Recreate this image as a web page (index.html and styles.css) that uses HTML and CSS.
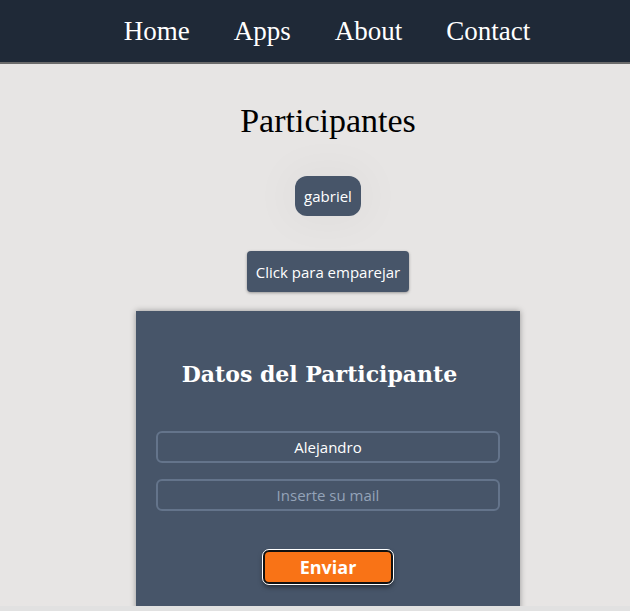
FILE: index.html
```html
<!DOCTYPE html>
<html lang="es">
<head>
<meta charset="utf-8">
<title>Participantes</title>
<link rel="stylesheet" href="styles.css">
</head>
<body>
<nav class="nav">
  <a class="nav-link" href="#">Home</a>
  <a class="nav-link" href="#">Apps</a>
  <a class="nav-link" href="#">About</a>
  <a class="nav-link" href="#">Contact</a>
</nav>
<main class="main">
  <h1 class="title">Participantes</h1>
  <div class="list">
    <span class="pill">gabriel</span>
  </div>
  <button class="match-btn" type="button">Click para emparejar</button>
  <form class="card">
    <h2 class="card-title">Datos del Participante</h2>
    <input class="field" type="text" value="Alejandro">
    <input class="field" type="email" placeholder="Inserte su mail">
    <button class="send-btn" type="button">Enviar</button>
  </form>
</main>
</body>
</html>
```
FILE: styles.css
```css
html {
  background: #e1e1e1;
}
body {
  margin: 0;
  background: #e7e5e4;
  height: 606px;
  overflow: hidden;
  font-family: "Open Sans", "Noto Sans", sans-serif;
}
.nav {
  height: 62px;
  background: #1f2937;
  border-bottom: 2px solid #6b6b6b;
  display: flex;
  justify-content: center;
  align-items: center;
  gap: 44px;
  padding-left: 24px;
}
.nav-link {
  color: #ffffff;
  text-decoration: none;
  font-family: "Liberation Serif", serif;
  font-size: 27px;
}
.main {
  display: flex;
  flex-direction: column;
  align-items: center;
  padding-left: 26px;
}
.title {
  margin: 38px 0 0;
  font-family: "Liberation Serif", serif;
  font-weight: normal;
  font-size: 34px;
  line-height: 38px;
  color: #000;
}
.list {
  margin-top: 36px;
  box-shadow: 0 0 40px 10px rgba(0,0,0,0.03);
  border-radius: 12px;
}
.pill {
  display: block;
  background: #475569;
  color: #fff;
  font-size: 15px;
  padding: 9px 9px;
  line-height: 22px;
  border-radius: 12px;
}
.match-btn {
  margin-top: 35px;
  background: #475569;
  color: #fff;
  border: none;
  border-radius: 4px;
  font-family: "Open Sans", "Noto Sans", sans-serif;
  font-size: 15px;
  line-height: 22px;
  padding: 10px 9px 9px;
  box-shadow: 0 1px 3px rgba(0,0,0,0.35);
}
.card {
  margin-top: 19px;
  width: 384px;
  background: #475569;
  box-shadow: 0 0 6px rgba(0,0,0,0.35);
  padding: 0 20px 22px;
  box-sizing: border-box;
  display: flex;
  flex-direction: column;
  align-items: center;
  height: 300px;
}
.card-title {
  margin: 48px 17px 0 0;
  font-family: "DejaVu Serif", serif;
  font-weight: bold;
  font-size: 22px;
  color: #fff;
  line-height: 30px;
}
.field {
  margin-top: 16px;
  width: 100%;
  box-sizing: border-box;
  height: 32px;
  background: transparent;
  border: 2px solid #64748b;
  border-radius: 6px;
  color: #fff;
  text-align: center;
  font-family: "Open Sans", "Noto Sans", sans-serif;
  font-size: 15px;
}
.card-title + .field {
  margin-top: 42px;
}
.field::placeholder {
  color: #94a3b8;
}
.send-btn {
  margin-top: 39px;
  width: 130px;
  height: 34px;
  background: #f97316;
  color: #fff;
  font-family: "Open Sans", "Noto Sans", sans-serif;
  font-weight: bold;
  font-size: 18px;
  border: 2px solid #111;
  outline: 1px solid #fff;
  border-radius: 6px;
  box-shadow: 0 3px 5px rgba(0,0,0,0.5);
}
```
